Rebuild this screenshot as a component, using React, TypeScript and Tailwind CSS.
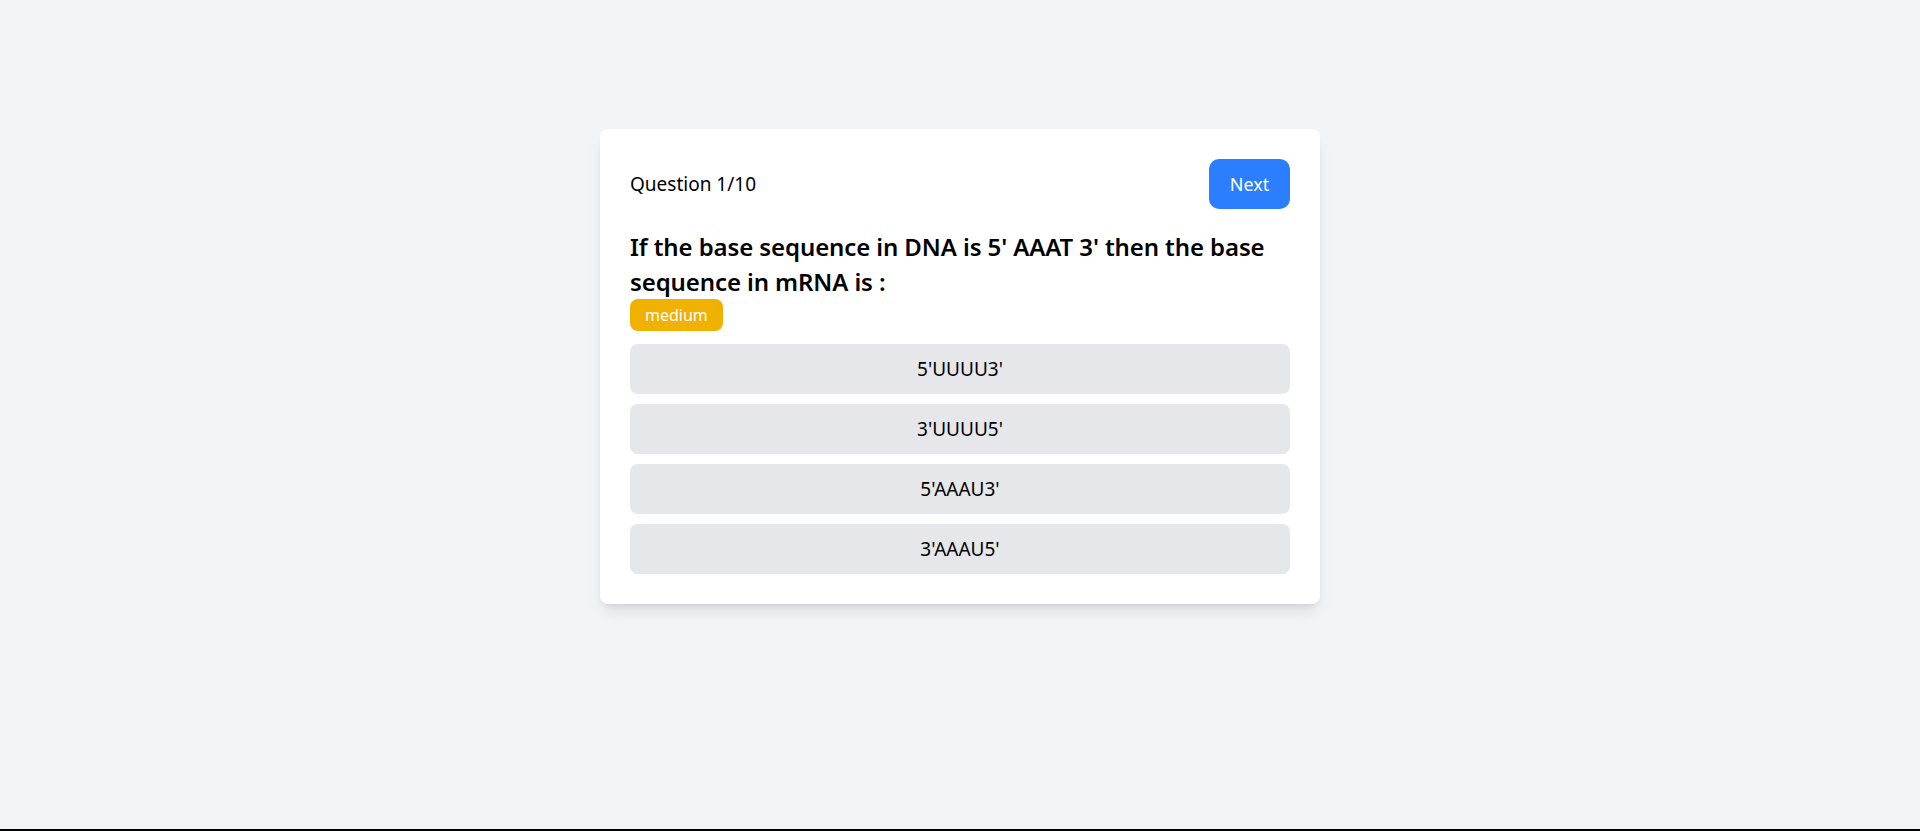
const options = ["5'UUUU3'", "3'UUUU5'", "5'AAAU3'", "3'AAAU5'"];

export default function App() {
  return (
    <div className="font-['Noto_Sans',sans-serif] text-black">
      <div className="h-[829px] bg-gray-100 flex justify-center pt-[129px]">
        <div className="w-[720px] h-fit bg-white rounded-lg shadow-lg p-[30px]">
          <div className="flex items-center justify-between">
            <span className="text-[19px] leading-7">Question 1/10</span>
            <button className="h-[50px] w-[81px] rounded-[10px] bg-blue-500 text-white text-lg">Next</button>
          </div>
          <h2 className="mt-5 text-2xl leading-[35px] font-semibold tracking-[-0.1px]">
            If the base sequence in DNA is 5' AAAT 3' then the base sequence in mRNA is :
          </h2>
          <span className="inline-flex items-center h-8 px-[15px] rounded-lg bg-yellow-500 text-white text-base">medium</span>
          <div className="mt-[13px] flex flex-col gap-[10px]">
            {options.map((o) => (
              <button key={o} className="h-[50px] w-full rounded-lg bg-gray-200 text-[19px]">
                {o}
              </button>
            ))}
          </div>
        </div>
      </div>
      <div className="h-[2px] bg-black" />
    </div>
  );
}
